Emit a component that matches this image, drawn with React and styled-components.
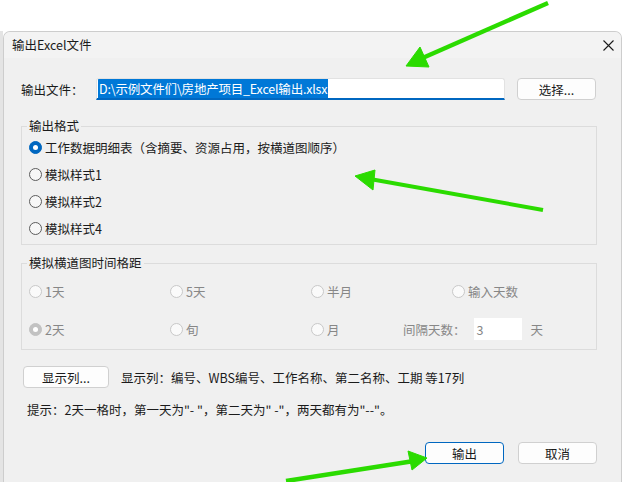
import React from 'react';
import styled, { createGlobalStyle } from 'styled-components';

const GlobalStyle = createGlobalStyle`
  html, body {
    margin: 0;
    padding: 0;
    background: #ffffff;
  }
`;

const Page = styled.div`
  position: relative;
  width: 623px;
  height: 482px;
  overflow: hidden;
  display: flex;
  flex-direction: column;
  background: #ffffff;
  font-family: "Noto Sans CJK SC", "Noto Sans", sans-serif;
  font-size: 12.5px;
  color: #1b1b1b;
`;

const TopGap = styled.div`
  height: 31px;
  flex: none;
`;

const Desk = styled.div`
  flex: 1;
  display: flex;
  min-height: 0;
`;

const Backdrop = styled.div`
  width: 3px;
  flex: none;
  background: #e4e4e4;
`;

const Dialog = styled.div`
  width: 619px;
  flex: none;
  display: flex;
  flex-direction: column;
  box-sizing: border-box;
  background: #f0f0f0;
  border: 1px solid #cdcdcd;
  border-bottom: none;
  border-radius: 7px 7px 0 0;
  overflow: hidden;
`;

const TitleBar = styled.div`
  height: 26px;
  flex: none;
  display: flex;
  align-items: center;
  justify-content: space-between;
  padding: 0 7px 0 8px;
  background: #f3f3f3;
`;

const Title = styled.span`
  line-height: 17px;
  margin-top: -1px;
`;

const Body = styled.div`
  display: flex;
  flex-direction: column;
  padding: 20px 24px 0 17px;
`;

const FileRow = styled.div`
  display: flex;
  align-items: center;
  height: 22px;
`;

const FieldLabel = styled.span`
  width: 75px;
  flex: none;
  line-height: 17px;
`;

const PathBox = styled.div`
  width: 409px;
  height: 22px;
  box-sizing: border-box;
  display: flex;
  align-items: center;
  padding: 0 1px;
  background: #ffffff;
  border: 1px solid #e2e2e2;
  border-bottom: 2px solid #0067c0;
  border-radius: 3px 3px 0 0;
  white-space: nowrap;
  overflow: hidden;
`;

const Selected = styled.span`
  background: #0078d7;
  color: #ffffff;
  line-height: 19px;
  padding: 0 1px;
  letter-spacing: -0.2px;
`;

const Button = styled.button`
  width: ${p => p.$width || 79}px;
  height: 22px;
  flex: none;
  box-sizing: border-box;
  margin-left: ${p => p.$gap || 0}px;
  padding: 0;
  font: inherit;
  color: #1b1b1b;
  background: #fdfdfd;
  border: 1px solid ${p => (p.$primary ? '#0067c0' : '#d0d0d0')};
  border-radius: 4px;
`;

const Group = styled.fieldset`
  width: 576px;
  box-sizing: border-box;
  margin: ${p => p.$top}px 0 0;
  padding: ${p => p.$pad};
  border: 1px solid #dcdcdc;
  min-width: 0;
`;

const Legend = styled.legend`
  margin-left: -2px;
  padding: 0 2px;
  line-height: 14px;
`;

const FormatRow = styled.label`
  height: 27px;
  display: flex;
  align-items: center;
`;

const GridRow = styled.div`
  height: 28px;
  display: flex;
  align-items: center;
  margin-top: ${p => p.$top || 0}px;
`;

const Cell = styled.label`
  width: ${p => p.$width || 141}px;
  flex: none;
  display: flex;
  align-items: center;
  color: #878787;
`;

const Dot = styled.span`
  width: 13px;
  height: 13px;
  flex: none;
  box-sizing: border-box;
  border-radius: 50%;
  display: flex;
  align-items: center;
  justify-content: center;
  margin-right: 3px;
  border: 1px solid
    ${p => (p.$checked ? (p.$disabled ? '#c2c2c2' : '#0067c0') : p.$disabled ? '#c8c8c8' : '#5c5c5c')};
  background: ${p => (p.$checked ? (p.$disabled ? '#c2c2c2' : '#0067c0') : p.$disabled ? '#fafafa' : '#f7f7f7')};

  &::after {
    content: '';
    display: ${p => (p.$checked ? 'block' : 'none')};
    width: 5px;
    height: 5px;
    border-radius: 50%;
    background: #ffffff;
  }
`;

const Interval = styled.div`
  display: flex;
  align-items: center;
  color: #878787;
`;

const DaysBox = styled.div`
  width: 48px;
  height: 22px;
  box-sizing: border-box;
  margin-left: 8px;
  padding-left: 3px;
  display: flex;
  align-items: center;
  background: #ffffff;
`;

const Unit = styled.span`
  margin-left: 9px;
`;

const ColumnsRow = styled.div`
  display: flex;
  align-items: center;
  margin: 16px 0 0 2px;
`;

const ColumnsText = styled.span`
  margin-left: 12px;
  line-height: 17px;
`;

const Hint = styled.div`
  margin: 13px 0 0 6px;
  line-height: 17px;
`;

const Actions = styled.div`
  display: flex;
  justify-content: flex-end;
  margin-top: 24px;
`;

const Arrows = styled.svg`
  position: absolute;
  inset: 0;
  pointer-events: none;
`;

const CloseIcon = () => (
  <svg width="11" height="11" viewBox="0 0 11 11">
    <path d="M0.5 0.5 L10.5 10.5 M10.5 0.5 L0.5 10.5" stroke="#1b1b1b" strokeWidth="1.1" />
  </svg>
);

const Radio = ({ checked, disabled, children, width }) =>
  disabled ? (
    <Cell $width={width}>
      <Dot $checked={checked} $disabled />
      {children}
    </Cell>
  ) : (
    <FormatRow>
      <Dot $checked={checked} />
      {children}
    </FormatRow>
  );

const formats = [
  '工作数据明细表（含摘要、资源占用，按横道图顺序）',
  '模拟样式1',
  '模拟样式2',
  '模拟样式4',
];

export default function App() {
  return (
    <Page>
      <GlobalStyle />
      <TopGap />
      <Desk>
        <Backdrop />
        <Dialog>
          <TitleBar>
            <Title>输出Excel文件</Title>
            <CloseIcon />
          </TitleBar>
          <Body>
            <FileRow>
              <FieldLabel>输出文件：</FieldLabel>
              <PathBox>
                <Selected>{'D:\\示例文件们\\房地产项目_Excel输出.xlsx'}</Selected>
              </PathBox>
              <Button $gap={12}>选择...</Button>
            </FileRow>

            <Group $top={19} $pad="1px 0 2px 7px">
              <Legend>输出格式</Legend>
              {formats.map((f, i) => (
                <Radio key={f} checked={i === 0}>
                  {f}
                </Radio>
              ))}
            </Group>

            <Group $top={11} $pad="7px 0 6px 7px">
              <Legend>模拟横道图时间格距</Legend>
              <GridRow>
                <Radio disabled>1天</Radio>
                <Radio disabled>5天</Radio>
                <Radio disabled>半月</Radio>
                <Radio disabled>输入天数</Radio>
              </GridRow>
              <GridRow $top={10}>
                <Radio disabled checked>2天</Radio>
                <Radio disabled>旬</Radio>
                <Radio disabled width={92}>月</Radio>
                <Interval>
                  间隔天数：
                  <DaysBox>3</DaysBox>
                  <Unit>天</Unit>
                </Interval>
              </GridRow>
            </Group>

            <ColumnsRow>
              <Button $width={86}>显示列...</Button>
              <ColumnsText>显示列：编号、WBS编号、工作名称、第二名称、工期 等17列</ColumnsText>
            </ColumnsRow>

            <Hint>{'提示：2天一格时，第一天为"- "，第二天为" -"，两天都有为"--"。'}</Hint>

            <Actions>
              <Button $primary>输出</Button>
              <Button $gap={14}>取消</Button>
            </Actions>
          </Body>
        </Dialog>
      </Desk>

      <Arrows width="623" height="482" viewBox="0 0 623 482">
        <g fill="#2bdb00" stroke="#2bdb00">
          <line x1="548" y1="3" x2="418" y2="60" strokeWidth="4.5" />
          <polygon points="406,66 420,47 429,67" strokeWidth="1" />
          <line x1="543" y1="210" x2="370" y2="179" strokeWidth="4" />
          <polygon points="355,176 375,170 373,190" strokeWidth="1" />
          <line x1="286" y1="481" x2="414" y2="461" strokeWidth="4.5" />
          <polygon points="427,458 408,451 412,470" strokeWidth="1" />
        </g>
      </Arrows>
    </Page>
  );
}
